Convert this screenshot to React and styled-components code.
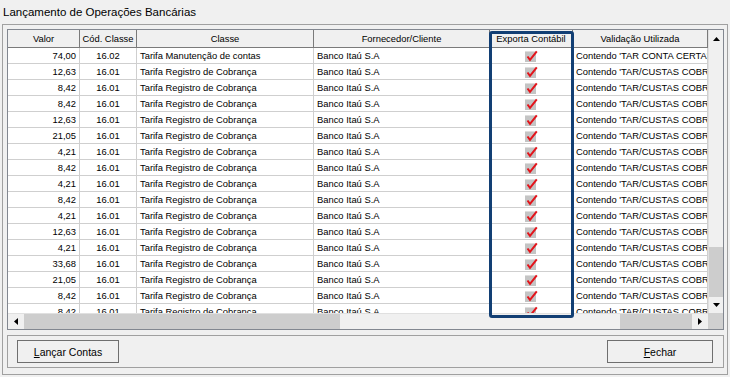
import React from "react";
import styled, { createGlobalStyle } from "styled-components";

const GlobalStyle = createGlobalStyle`
  html, body {
    margin: 0;
    padding: 0;
    background: #f0f0f0;
  }
  body {
    font-family: "Liberation Sans", Arial, sans-serif;
    color: #000;
  }
`;

const COLS = "72px 57px 177px 176px 83px 135px";

const rows = [
  ["74,00", "16.02", "Tarifa Manutenção de contas", "Contendo 'TAR CONTA CERTA'"],
  ["12,63", "16.01", "Tarifa Registro de Cobrança", "Contendo 'TAR/CUSTAS COBRANÇA'"],
  ["8,42", "16.01", "Tarifa Registro de Cobrança", "Contendo 'TAR/CUSTAS COBRANÇA'"],
  ["8,42", "16.01", "Tarifa Registro de Cobrança", "Contendo 'TAR/CUSTAS COBRANÇA'"],
  ["12,63", "16.01", "Tarifa Registro de Cobrança", "Contendo 'TAR/CUSTAS COBRANÇA'"],
  ["21,05", "16.01", "Tarifa Registro de Cobrança", "Contendo 'TAR/CUSTAS COBRANÇA'"],
  ["4,21", "16.01", "Tarifa Registro de Cobrança", "Contendo 'TAR/CUSTAS COBRANÇA'"],
  ["8,42", "16.01", "Tarifa Registro de Cobrança", "Contendo 'TAR/CUSTAS COBRANÇA'"],
  ["4,21", "16.01", "Tarifa Registro de Cobrança", "Contendo 'TAR/CUSTAS COBRANÇA'"],
  ["8,42", "16.01", "Tarifa Registro de Cobrança", "Contendo 'TAR/CUSTAS COBRANÇA'"],
  ["4,21", "16.01", "Tarifa Registro de Cobrança", "Contendo 'TAR/CUSTAS COBRANÇA'"],
  ["12,63", "16.01", "Tarifa Registro de Cobrança", "Contendo 'TAR/CUSTAS COBRANÇA'"],
  ["4,21", "16.01", "Tarifa Registro de Cobrança", "Contendo 'TAR/CUSTAS COBRANÇA'"],
  ["33,68", "16.01", "Tarifa Registro de Cobrança", "Contendo 'TAR/CUSTAS COBRANÇA'"],
  ["21,05", "16.01", "Tarifa Registro de Cobrança", "Contendo 'TAR/CUSTAS COBRANÇA'"],
  ["8,42", "16.01", "Tarifa Registro de Cobrança", "Contendo 'TAR/CUSTAS COBRANÇA'"],
  ["8,42", "16.01", "Tarifa Registro de Cobrança", "Contendo 'TAR/CUSTAS COBRANÇA'"],
];

const Window = styled.div`
  width: 730px;
  height: 377px;
  display: flex;
  flex-direction: column;
`;

const Title = styled.div`
  height: 24px;
  line-height: 24px;
  padding-left: 3px;
  font-size: 11.5px;
`;

const Frame = styled.div`
  margin: 0 2px 2px 2px;
  border: 1px solid #a0a0a0;
  padding: 4px 3px 6px 4px;
  display: flex;
  flex-direction: column;
  gap: 5px;
  flex: 1;
`;

const GridFrame = styled.div`
  position: relative;
  height: 301px;
  box-sizing: border-box;
  border: 1px solid #828790;
  background: #fff;
  display: grid;
  grid-template-columns: 700px 15px;
  grid-template-rows: 283px 16px;
`;

const Viewport = styled.div`
  overflow: hidden;
  font-size: 9.4px;
`;

const Row = styled.div`
  display: grid;
  grid-template-columns: ${COLS};
  height: ${(p) => (p.$header ? 18 : 16)}px;
`;

const HeadCell = styled.div`
  box-sizing: border-box;
  background: #f0f0f0;
  border-right: 1px solid #7a7a7a;
  border-bottom: 1px solid #7a7a7a;
  text-align: center;
  line-height: 17px;
  white-space: nowrap;
  overflow: hidden;
`;

const Cell = styled.div`
  box-sizing: border-box;
  border-right: 1px solid #cfcfcf;
  border-bottom: 1px solid #cfcfcf;
  line-height: 15px;
  padding: 0 3px;
  text-align: ${(p) => p.$align || "left"};
  white-space: nowrap;
  overflow: hidden;
  display: ${(p) => (p.$icon ? "flex" : "block")};
  align-items: center;
  justify-content: center;
`;

const VScroll = styled.div`
  display: flex;
  flex-direction: column;
  background: #ececec;
  border-left: 1px solid #e0e0e0;
`;

const HScroll = styled.div`
  display: flex;
  background: #ececec;
  border-top: 1px solid #e0e0e0;
`;

const ArrowButton = styled.div`
  flex: none;
  width: ${(p) => (p.$horizontal ? "16px" : "auto")};
  height: ${(p) => (p.$horizontal ? "auto" : p.$tall ? "17px" : "16px")};
  background: #f0f0f0;
  display: flex;
  align-items: center;
  justify-content: center;
`;

const Track = styled.div`
  flex: ${(p) => (p.$size ? "none" : 1)};
  ${(p) => (p.$horizontal ? `width: ${p.$size}px;` : `height: ${p.$size}px;`)}
  background: ${(p) => (p.$thumb ? "#cdcdcd" : "#f0f0f0")};
`;

const Corner = styled.div`
  background: #d0d0d0;
`;

const Highlight = styled.div`
  position: absolute;
  left: 481px;
  top: 1px;
  width: 85px;
  height: 287px;
  box-sizing: border-box;
  border: 3px solid #123f74;
  border-radius: 3px;
  pointer-events: none;
`;

const ButtonPanel = styled.div`
  height: 33px;
  box-sizing: border-box;
  border: 1px solid #a0a0a0;
  padding: 4px 10px 0 9px;
  display: flex;
  justify-content: space-between;
  align-items: flex-start;
`;

const Button = styled.button`
  width: ${(p) => p.$width}px;
  height: 23px;
  padding: 0;
  border: 1px solid #6f6f6f;
  background: #f0f0f0;
  font-family: "Liberation Sans", Arial, sans-serif;
  font-size: 10.5px;
  color: #000;
  u {
    text-decoration: underline;
  }
`;

const Arrow = ({ dir }) => {
  const pts = {
    up: "0,4 7,4 3.5,0",
    down: "0,0 7,0 3.5,4",
    left: "4,0 4,7 0,3.5",
    right: "0,0 0,7 4,3.5",
  }[dir];
  const vertical = dir === "up" || dir === "down";
  return (
    <svg width={vertical ? 7 : 4} height={vertical ? 4 : 7}>
      <polygon points={pts} fill="#000" />
    </svg>
  );
};

const CheckIcon = () => (
  <svg width="14" height="12" viewBox="0 0 14 12">
    <rect x="1" y="1" width="11" height="11" fill="#c4c4c4" />
    <rect x="1" y="1" width="11" height="1" fill="#dedede" />
    <path d="M3.5 6.5 L6 9.8 L12.8 1.3" fill="none" stroke="#e3141b" strokeWidth="2" />
  </svg>
);

export default function App() {
  return (
    <Window>
      <GlobalStyle />
      <Title>Lançamento de Operações Bancárias</Title>
      <Frame>
        <GridFrame>
          <Viewport>
            <Row $header>
              <HeadCell>Valor</HeadCell>
              <HeadCell>Cód. Classe</HeadCell>
              <HeadCell>Classe</HeadCell>
              <HeadCell>Fornecedor/Cliente</HeadCell>
              <HeadCell>Exporta Contábil</HeadCell>
              <HeadCell>Validação Utilizada</HeadCell>
            </Row>
            {rows.map((r, i) => (
              <Row key={i}>
                <Cell $align="right">{r[0]}</Cell>
                <Cell $align="center">{r[1]}</Cell>
                <Cell>{r[2]}</Cell>
                <Cell>Banco Itaú S.A</Cell>
                <Cell $icon>
                  <CheckIcon />
                </Cell>
                <Cell>{r[3]}</Cell>
              </Row>
            ))}
          </Viewport>
          <VScroll>
            <ArrowButton $tall>
              <Arrow dir="up" />
            </ArrowButton>
            <Track />
            <Track $thumb $size={50} />
            <ArrowButton>
              <Arrow dir="down" />
            </ArrowButton>
          </VScroll>
          <HScroll>
            <ArrowButton $horizontal>
              <Arrow dir="left" />
            </ArrowButton>
            <Track $horizontal $thumb $size={316} />
            <Track $horizontal />
            <Track $horizontal $thumb $size={72} />
            <ArrowButton $horizontal>
              <Arrow dir="right" />
            </ArrowButton>
          </HScroll>
          <Corner />
          <Highlight />
        </GridFrame>
        <ButtonPanel>
          <Button $width={102}>
            <u>L</u>ançar Contas
          </Button>
          <Button $width={106}>
            <u>F</u>echar
          </Button>
        </ButtonPanel>
      </Frame>
    </Window>
  );
}
